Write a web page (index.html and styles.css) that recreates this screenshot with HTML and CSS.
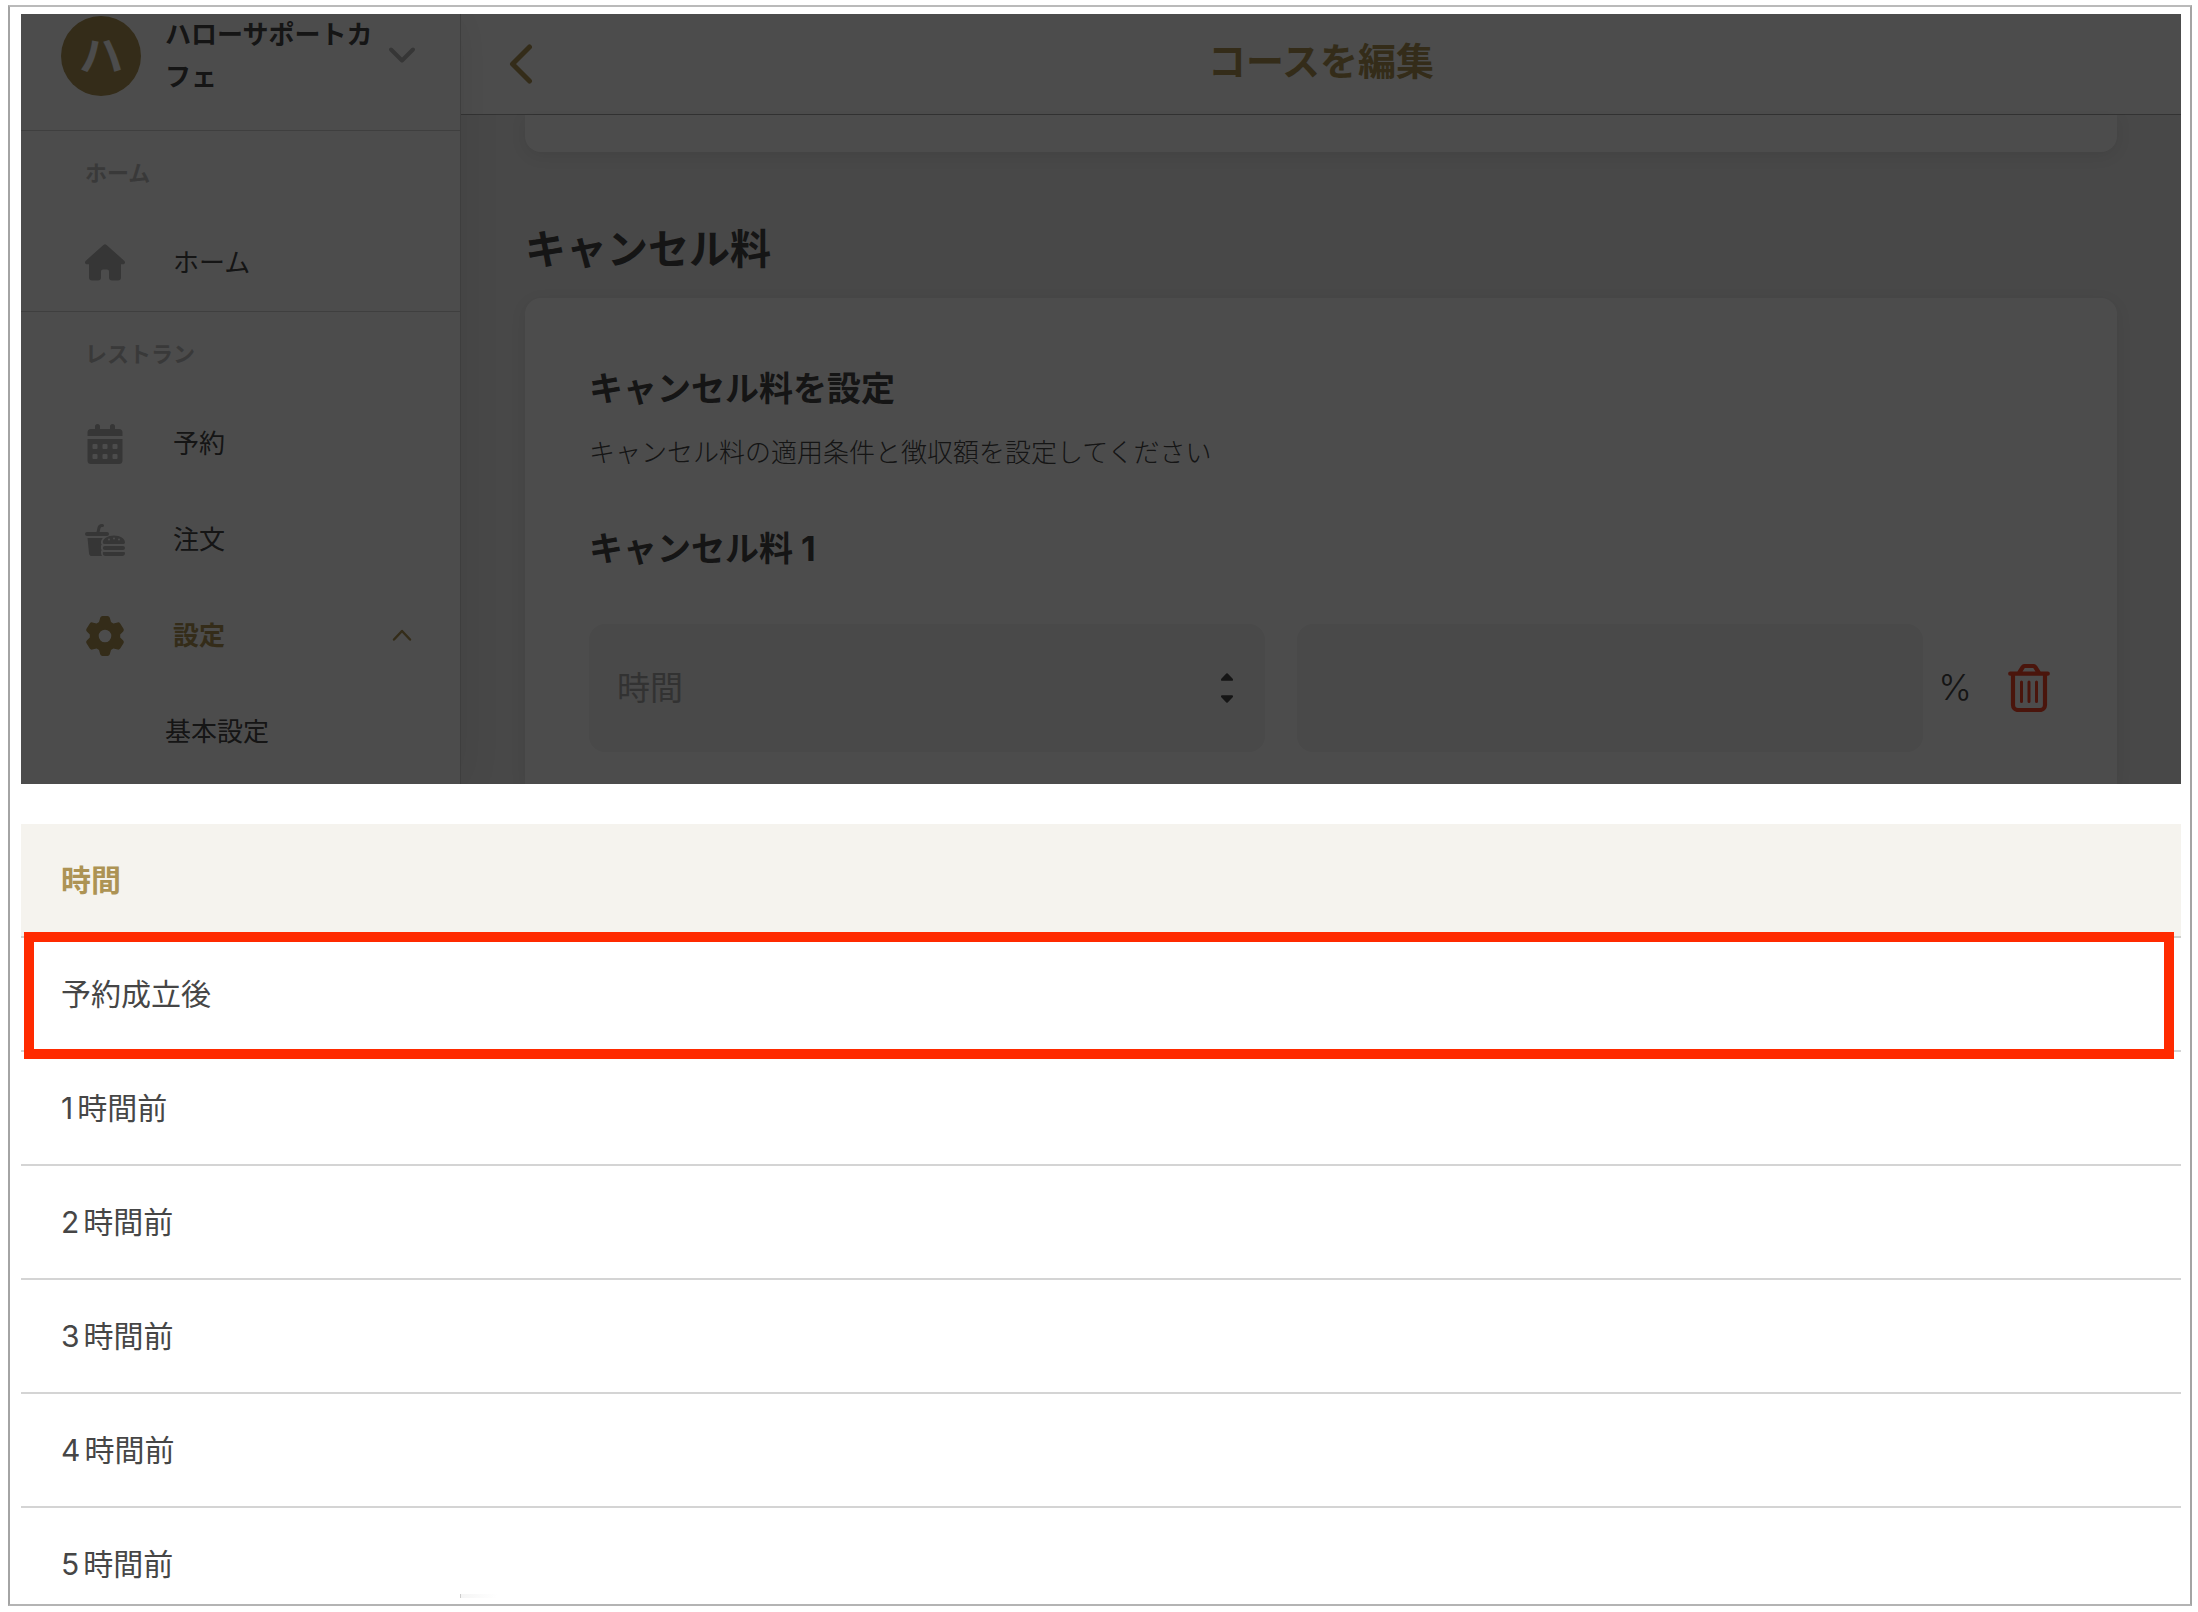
FILE: index.html
```html
<!DOCTYPE html>
<html lang="ja">
<head>
<meta charset="utf-8">
<meta name="viewport" content="width=device-width, initial-scale=1">
<title>コースを編集</title>
<link rel="stylesheet" href="styles.css">
</head>
<body>
<div class="frame">
  <div class="app">
    <aside class="sidebar">
      <button class="account" type="button">
        <span class="avatar">ハ</span>
        <span class="account-name">ハローサポートカフェ</span>
        <svg class="caret" viewBox="0 0 30 30" aria-hidden="true"><path d="M4 8.500l11 11 11-11" stroke-width="4"/></svg>
      </button>
      <nav>
        <section class="group">
          <h2 class="group-label">ホーム</h2>
          <a class="item" href="#home">
            <svg class="icon" viewBox="0 0 40 40" aria-hidden="true"><path fill="currentColor" d="M18.400 1.900a2.400 2.400 0 0 1 3.200 0l17.600 15.800c1.600 1.500.6 3.500-1.200 3.500h-2v13.400a3 3 0 0 1-3 3h-6a3 3 0 0 1-3-3v-6a2 2 0 0 0-2-2h-4a2 2 0 0 0-2 2v6a3 3 0 0 1-3 3H7a3 3 0 0 1-3-3V21.200H2c-1.800 0-2.800-2-1.200-3.500z"/></svg>
            <span>ホーム</span>
          </a>
        </section>
        <section class="group">
          <h2 class="group-label">レストラン</h2>
          <a class="item" href="#reservations">
            <svg class="icon" viewBox="0 0 40 40" aria-hidden="true"><path fill="currentColor" fill-rule="evenodd" d="M12.500 0A2.500 2.500 0 0 1 15 2.500V5h10V2.500a2.500 2.500 0 0 1 5 0V5h4a3.500 3.500 0 0 1 3.500 3.500V12h-35V8.500A3.500 3.500 0 0 1 6 5h4V2.500A2.500 2.500 0 0 1 12.500 0zM2.500 15h35v21.500A3.500 3.500 0 0 1 34 40H6a3.500 3.500 0 0 1-3.500-3.500zm6 5a1 1 0 0 0-1 1v3a1 1 0 0 0 1 1h3a1 1 0 0 0 1-1v-3a1 1 0 0 0-1-1zm10 0a1 1 0 0 0-1 1v3a1 1 0 0 0 1 1h3a1 1 0 0 0 1-1v-3a1 1 0 0 0-1-1zm10 0a1 1 0 0 0-1 1v3a1 1 0 0 0 1 1h3a1 1 0 0 0 1-1v-3a1 1 0 0 0-1-1zm-20 10a1 1 0 0 0-1 1v3a1 1 0 0 0 1 1h3a1 1 0 0 0 1-1v-3a1 1 0 0 0-1-1zm10 0a1 1 0 0 0-1 1v3a1 1 0 0 0 1 1h3a1 1 0 0 0 1-1v-3a1 1 0 0 0-1-1zm10 0a1 1 0 0 0-1 1v3a1 1 0 0 0 1 1h3a1 1 0 0 0 1-1v-3a1 1 0 0 0-1-1z"/></svg>
            <span>予約</span>
          </a>
          <a class="item" href="#orders">
            <svg class="icon" viewBox="0 0 40 40" aria-hidden="true"><g fill="currentColor"><path d="M2 12h9.500l1-4.500A4.500 4.500 0 0 1 17 4h.5a1.500 1.500 0 0 1 0 3H17c-.8 0-1.300.4-1.500 1.200L14.600 12H22a2 2 0 0 1 0 4H2a2 2 0 0 1 0-4z"/><path d="M2.500 18h15.300c-1.400 1.500-2 3.300-1.800 5.200l.7 1.300-.7 1.500v3l.7 1-.7 1.500c0 2 .3 3.200 1 4.500H7a3 3 0 0 1-3-2.800z"/><path fill-rule="evenodd" d="M17.800 22.500c0-4 5-7 11.200-7s11 3 11 7c0 .9-.7 1.500-1.500 1.500h-19c-.9 0-1.700-.6-1.700-1.500zM24 18.500a1 1 0 1 0 0 2 1 1 0 0 0 0-2zm5-1a1 1 0 1 0 0 2 1 1 0 0 0 0-2zm5 1a1 1 0 1 0 0 2 1 1 0 0 0 0-2z"/><rect x="17.800" y="26" width="22.200" height="4" rx="2"/><path d="M19 32h20a1 1 0 0 1 1 1 3 3 0 0 1-3 3H21a3 3 0 0 1-3.200-3c0-.6.500-1 1.200-1z"/></g></svg>
            <span>注文</span>
          </a>
          <a class="item item-active" href="#settings">
            <svg class="icon" viewBox="0 0 40 40" aria-hidden="true"><path fill="currentColor" fill-rule="evenodd" d="M17.500 0h5a2.500 2.500 0 0 1 2.300 1.800l1.200 4.200 2.400 1.400 4.300-1c1-.2 1.900.1 2.500 1l3.300 5.300c.5.900.4 1.900-.3 2.700L35.200 18.600v2.800l3 3.200c.7.800.8 1.800.3 2.700l-3.300 5.300c-.6.900-1.500 1.200-2.500 1l-4.300-1L26 34l-1.200 4.200a2.500 2.500 0 0 1-2.300 1.800h-5a2.500 2.500 0 0 1-2.300-1.800L14 34l-2.400-1.400-4.300 1c-1 .2-1.900-.1-2.500-1l-3.300-5.300c-.5-.9-.4-1.900.3-2.700l3-3.200v-2.800l-3-3.200c-.7-.8-.8-1.800-.3-2.700l3.300-5.300c.6-.9 1.500-1.200 2.500-1l4.300 1L14 6l1.200-4.200A2.500 2.500 0 0 1 17.500 0zM20 13.700a6.300 6.300 0 1 0 0 12.600 6.300 6.300 0 0 0 0-12.600z"/></svg>
            <span>設定</span>
            <svg class="caret" viewBox="0 0 30 30" aria-hidden="true"><path d="M7 18.500l8-8.500 8 8.500" stroke-width="2.500"/></svg>
          </a>
          <a class="item item-sub" href="#basic">基本設定</a>
        </section>
      </nav>
    </aside>
    <main class="main">
      <header class="topbar">
        <button class="back" type="button" aria-label="戻る">
          <svg viewBox="0 0 24 40" aria-hidden="true"><path d="M20.500 3L3.500 20l17 17" stroke-width="5"/></svg>
        </button>
        <h1 class="title">コースを編集</h1>
      </header>
      <div class="content">
        <div class="card card-end"></div>
        <h2 class="heading">キャンセル料</h2>
        <section class="card card-fee">
          <h3 class="subheading">キャンセル料を設定</h3>
          <p class="hint">キャンセル料の適用条件と徴収額を設定してください</p>
          <h3 class="subheading">キャンセル料 1</h3>
          <div class="fee-row">
            <div class="select-wrap">
              <select class="field" aria-label="時間"><option>時間</option></select>
              <svg class="sorter" viewBox="0 0 12 30" aria-hidden="true"><path fill="currentColor" d="M5.300.5a1 1 0 0 1 1.400 0l5 5.300c.6.900.3 2-.7 2H1c-1 0-1.300-1.100-.7-2zM5.300 29.500a1 1 0 0 0 1.400 0l5-5.300c.6-.9.3-2-.7-2H1c-1 0-1.300 1.100-.7 2z"/></svg>
            </div>
            <div class="rate-wrap">
              <input class="field" id="rate" type="text" aria-label="キャンセル料率">
            </div>
            <label class="unit" for="rate">%</label>
            <button class="delete" type="button" aria-label="削除">
              <svg viewBox="0 0 42 48" aria-hidden="true"><path d="M2.200 9.700h37.600M11 9l3.500-5.500A2.800 2.800 0 0 1 16.800 2h8.400a2.800 2.800 0 0 1 2.300 1.500L31 9M5 10v31a5 5 0 0 0 5 5h22a5 5 0 0 0 5-5V10" stroke-width="4.200"/><path d="M13.500 18v19.500M21 18v19.500M28.500 18v19.500" stroke-width="3"/></svg>
            </button>
          </div>
        </section>
      </div>
    </main>
    <div class="backdrop"></div>
  </div>
  <section class="sheet">
    <h2 class="sheet-title">時間</h2>
    <ul class="options">
      <li class="marked"><button class="option" type="button">予約成立後</button></li>
      <li><button class="option" type="button"><span class="num">1</span>時間前</button></li>
      <li><button class="option" type="button"><span class="num">2</span>時間前</button></li>
      <li><button class="option" type="button"><span class="num">3</span>時間前</button></li>
      <li><button class="option" type="button"><span class="num">4</span>時間前</button></li>
      <li><button class="option" type="button"><span class="num">5</span>時間前</button></li>
    </ul>
  </section>
</div>
</body>
</html>
```
FILE: styles.css
```css
* { box-sizing: border-box; }

body {
  margin: 0;
  min-height: 100vh;
  display: flex;
  padding: 5px 6px 6px 8px;
  background: #fff;
  color: #464646;
  font-family: Inter, "Noto Sans CJK JP", sans-serif;
  font-size: 26px;
}

h1, h2, h3, p, ul { margin: 0; padding: 0; }
ul { list-style: none; }
a { color: inherit; text-decoration: none; }
button { margin: 0; padding: 0; border: 0; background: none; color: inherit; font: inherit; text-align: left; }
svg { display: block; flex: none; fill: none; stroke-linecap: round; stroke-linejoin: round; }

.frame {
  position: relative;
  flex: 1;
  min-width: 0;
  padding: 7px 9px 0 11px;
  border: 2px solid #a4a4a4;
  border-top-color: #bababa;
  border-bottom-color: #b4b4b4;
}

/* Sidebar edge and its shadow showing below the sheet */
.frame::after {
  content: "";
  position: absolute;
  bottom: 6px;
  left: 450px;
  width: 36px;
  height: 4px;
  border-left: 1px solid #ccc;
  background: linear-gradient(to right, #f5f5f5, #fff);
}

/* Application behind the sheet */
.app { position: relative; display: flex; overflow: hidden; }
.backdrop { position: absolute; inset: 0; z-index: 3; background: rgba(0, 0, 0, .7); }

.sidebar {
  position: relative;
  z-index: 2;
  flex: none;
  width: 440px;
  border-right: 1px solid #d0d0d0;
  background: #fff;
  box-shadow: 0 0 40px rgba(0, 0, 0, .08);
}

.account {
  display: flex;
  align-items: center;
  width: 100%;
  padding: 0 43px 32px 40px;
}
.avatar {
  flex: none;
  width: 80px;
  margin-right: 24px;
  border-radius: 50%;
  background: #ad9354;
  color: #fff;
  font-size: 44px;
  font-weight: 700;
  line-height: 80px;
  text-align: center;
}
.account-name { flex: 1; margin-right: 12px; font-weight: 700; line-height: 42px; }
.caret { width: 30px; height: 30px; margin-left: auto; stroke: #b4b4b4; }

.group { border-top: 1px solid #d2d2d2; }
.group-label { padding-left: 64px; color: #c0c0c0; font-size: 22px; font-weight: 700; line-height: 84px; }
.item { display: flex; align-items: center; padding: 0 43px 0 64px; line-height: 96px; }
.icon { width: 40px; height: 40px; margin-right: 48px; color: #b4b4b4; }
.item-active { color: #ad9354; font-weight: 700; }
.item-active .icon { color: #ad9354; }
.item-active .caret { stroke: #ad9354; }
.item-sub { padding-left: 144px; }

.main { flex: 1; min-width: 0; background: #f0f0f0; }
.topbar {
  display: grid;
  grid-template-columns: 24px 1fr 24px;
  align-items: center;
  padding: 17px 48px 23px;
  border-bottom: 1px solid #aaa;
  background: #fff;
}
.back svg { width: 24px; height: 40px; stroke: #ad9354; }
.back { padding-top: 6px; }
.title { color: #ad9354; font-size: 38px; font-weight: 700; line-height: 60px; text-align: center; }

.content { padding: 0 64px; }
.card { background: #fff; box-shadow: 0 4px 16px rgba(0, 0, 0, .08); }
.card-end { height: 37px; border-radius: 0 0 16px 16px; }
.heading { margin: 67px 0 19px; font-size: 41px; font-weight: 700; line-height: 60px; }
.card-fee { padding: 64px 64px 32px; border-radius: 16px 16px 0 0; }
.subheading { font-size: 34px; font-weight: 700; line-height: 54px; }
.hint { margin: 16px 0 48px; font-weight: 300; line-height: 42px; }

.fee-row { display: flex; align-items: center; margin-top: 48px; }
.field {
  display: block;
  width: 100%;
  height: 128px;
  padding: 0 28px;
  border: 0;
  border-radius: 16px;
  background: #f4f4f4;
  color: #a8a8a8;
  font: inherit;
  font-size: 33px;
  appearance: none;
}
.select-wrap { position: relative; flex: 676 1 0; min-width: 0; margin-right: 32px; }
.sorter { position: absolute; top: 49px; right: 32px; width: 12px; height: 30px; color: #464646; }
.rate-wrap { flex: 627 1 0; min-width: 0; }
.unit { margin: 0 36px 0 15px; padding-bottom: 2px; font-size: 36px; font-weight: 300; }
.delete svg { width: 42px; height: 48px; stroke: #f7462b; }
.delete { margin-right: 3px; }

/* Sheet of choices */
.sheet { margin-top: 40px; font-size: 30px; line-height: 44px; }
.sheet-title {
  padding: 34px 40px;
  border-bottom: 2px solid #d0d0cc;
  background: #f5f3ee;
  color: #ad9354;
  font-size: 30px;
  font-weight: 700;
}
.option { display: block; width: 100%; padding: 34px 40px; border-bottom: 2px solid #d4d4d4; }
.options li:last-child .option { padding-bottom: 18px; border-bottom: 0; }
.num { margin-right: 4px; }

.marked { position: relative; }
.marked::after {
  content: "";
  position: absolute;
  inset: -6px 7px -7px 3px;
  border: 10px solid #ff2a00;
}
```
